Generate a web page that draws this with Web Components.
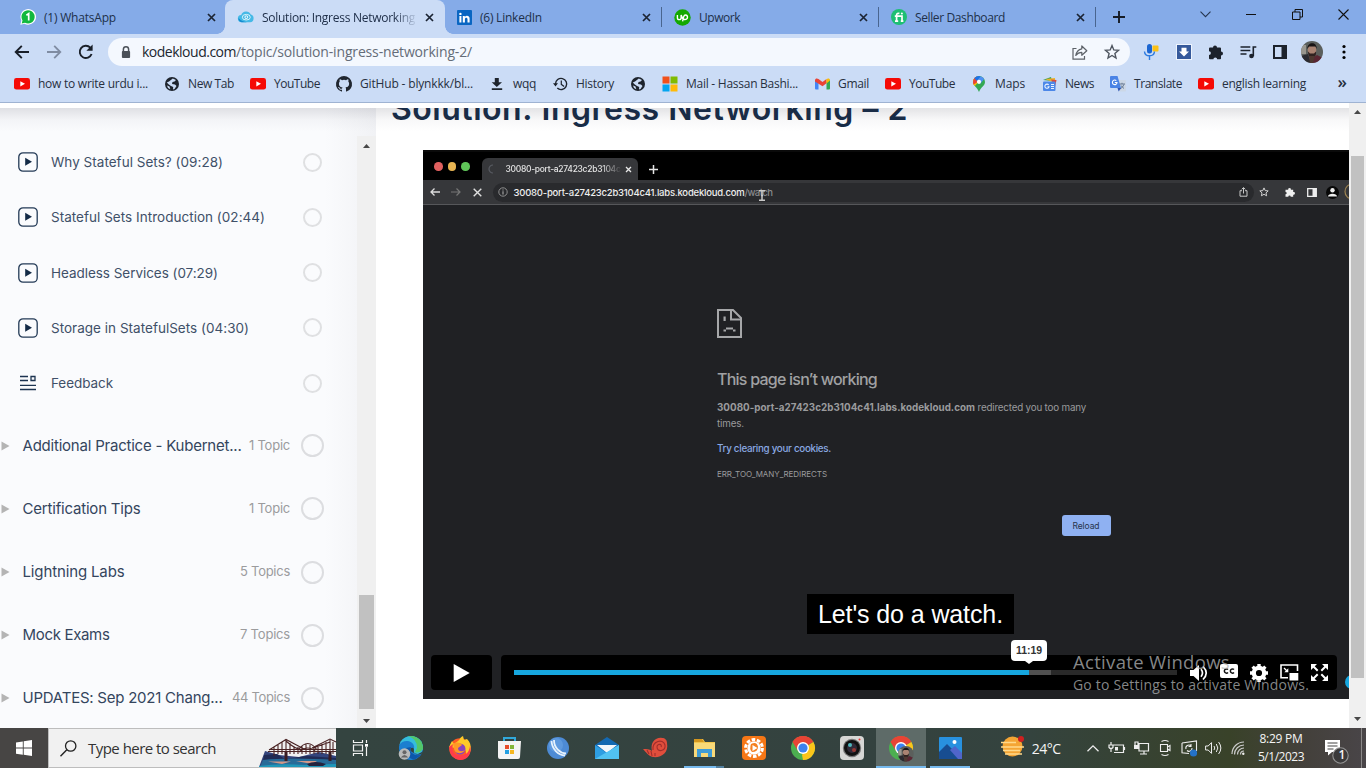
<!DOCTYPE html>
<html lang="en">
<head>
<meta charset="utf-8">
<title>Solution: Ingress Networking</title>
<style>
html,body{margin:0;height:100%;overflow:hidden}
body{font-family:"Open Sans","Noto Sans",sans-serif;font-size:12px;color:#1d2b40;background:#fff}
</style>
</head>
<body>
<desktop-screen></desktop-screen>
<script>
const ICONS = {
  whatsapp:[16,16,'<path d="M.3 15.8 1.4 11.6A7.8 7.8 0 1 1 4.5 14.7z" fill="#fff"/><path d="M1.7 14.4 2.5 11.4A6.6 6.6 0 1 1 5 13.7z" fill="#12b83e"/><path d="M6.4 6.2 8.7 4.6V11.4" stroke="#fff" stroke-width="1.7" fill="none"/>'],
  kode:[16,16,'<path d="M3.7 13.2A3.6 3.6 0 0 1 3.2 6 5.2 5.2 0 0 1 12.8 5.6 3.9 3.9 0 0 1 12.2 13.2z" fill="#45b9e6"/><path d="M3.7 13.2A3.6 3.6 0 0 1 .5 9Q4 13 9 13.2z" fill="#158bd0"/><ellipse cx="8.3" cy="8.2" rx="4" ry="2.8" fill="none" stroke="#d9f3fb"/><circle cx="8.3" cy="8.2" r="1.4" fill="none" stroke="#fff"/>'],
  linkedin:[15,15,'<rect width="15" height="15" rx="1" fill="#0a66c2"/><path d="M2.4 6h2v6.4h-2zM5.8 6h2v.9C9 5.300 12.600 5.300 12.600 8.700v3.700h-2.100V9.200c0-2-2.600-2-2.600 0v3.200H5.800z" fill="#fff"/><circle cx="3.400" cy="3.900" r="1.200" fill="#fff"/>'],
  upwork:[17,17,'<circle cx="8.500" cy="8.500" r="8.200" fill="#14a800"/><path d="M3.400 6v2.700c0 2.500 3.700 2.500 3.700 0V6C7.800 8.500 9 10.200 10.400 10.500 14.300 11 14.300 6 11.500 6 9.300 6 9.300 9 8.600 12.400" fill="none" stroke="#fff" stroke-width="1.400"/>'],
  fiverr:[16,16,'<circle cx="8" cy="8" r="8" fill="#1dbf73"/><path d="M3.800 7.200H11v5M5.600 12.200V6.200C5.600 4.300 7 4.200 8.400 4.300M4 12.200h3.200M9.800 12.200h2.600" fill="none" stroke="#fff" stroke-width="1.700"/><circle cx="10.900" cy="4.600" r="1" fill="#fff"/>'],
  close:[9,9,'<path d="m1 1 7 7M8 1 1 8" stroke="#1b2433" stroke-width="1.700"/>'],
  plus:[12,12,'<path d="M6 0v12M0 6h12" stroke="#161c26" stroke-width="1.900"/>'],
  wdown:[11,7,'<path d="m.5.700 5 5 5-5" fill="none" stroke="#26364f" stroke-width="1.100"/>'],
  wmin:[10,1,'<path d="M0 .5h10" stroke="#111" stroke-width="1"/>'],
  wrest:[11,11,'<path d="M.5 3h7.500v7.500H.5zM3 3V.500h7.500V8H8" fill="none" stroke="#111"/>'],
  wclose:[11,11,'<path d="m.5.500 10 10M10.500.500l-10 10" stroke="#111" stroke-width="1.100"/>'],
  back:[16,14,'<path d="M15 7H2M7.800.800 1.700 7l6.100 6.200" fill="none" stroke="#191f29" stroke-width="1.900"/>'],
  fwd:[16,14,'<path d="M1 7h13M8.200.800 14.300 7l-6.100 6.200" fill="none" stroke="#7f8ca2" stroke-width="1.800"/>'],
  reload:[16,16,'<path d="M13.600 10A6.100 6.100 0 1 1 12.300 3.700" fill="none" stroke="#191f29" stroke-width="1.900"/><path d="M14.600.500v6.200H8.400z" fill="#191f29"/>'],
  lock:[10,13,'<path d="M2.400 6V3.300a2.600 2.600 0 0 1 5.200 0V6" fill="none" stroke="#4a5058" stroke-width="1.500"/><rect x=".9" y="5" width="8.200" height="7" rx="1" fill="#4a5058"/>'],
  share:[16,15,'<path d="M4.500 3.500H1v10.700h11.500V11" fill="none" stroke="#5c6168" stroke-width="1.200"/><path d="M9.800 1v2.800C6 4.400 4.400 7 3.800 10.500 5.600 8 7.400 7.300 9.800 7.300v3L14.800 5.700z" fill="none" stroke="#5c6168" stroke-width="1.200" stroke-linejoin="round"/>'],
  star:[16,16,'<path d="m8 1.500 1.800 4.400 4.700.4-3.600 3.100 1.100 4.600-4-2.500-4 2.500 1.100-4.600L1.500 6.300l4.700-.4z" fill="none" stroke="#4f5660" stroke-width="1.400"/>'],
  mic:[16,16,'<rect x="8.500" y="1.500" width="6" height="6" rx="1" fill="#fbc116"/><rect x="3" y="0" width="5" height="9.500" rx="2.500" fill="#1b66d2"/><path d="M.5 7.500c.3 5.700 9.600 5.700 10 0M5.500 12v4" fill="none" stroke="#2d7be0" stroke-width="1.400"/>'],
  dl:[16,16,'<rect x=".5" y=".5" width="15" height="15" fill="#35599b" stroke="#eef4fd"/><path d="M5.500 3.800h5V7.500H13L8 12.500 3 7.500h2.500z" fill="#fff"/>'],
  puzzle:[16,16,'<path d="M1 4.500q0-1 1-1H5a2 2 0 1 1 4 0h3q1 0 1 1V7.500a2 2 0 1 1 0 4V14.500q0 .8-1 .8H9.200a1.900 1.900 0 0 0-3.800 0H2q-1 0-1-1V11a1.900 1.900 0 0 0 0-3.800z" fill="#1c222c"/>'],
  music:[17,14,'<path d="M.5 2h9.800M.5 5.500h9.800M.5 9h6M13.300 11.200V2h3" fill="none" stroke="#1c222c" stroke-width="1.600"/><circle cx="11.500" cy="11" r="2.300" fill="#1c222c"/>'],
  panel:[14,14,'<path d="M1 1h12v12H1z" fill="none" stroke="#1c222c" stroke-width="2"/><path d="M8.500 1H13v12H8.500z" fill="#1c222c"/>'],
  avatar:[22,22,'<clipPath id="a"><circle cx="11" cy="11" r="11"/></clipPath><g clip-path="url(#a)"><path fill="#5b5f5c" d="M0 0h22v22H0z"/><path fill="#98968e" d="M0 4h5v9H0z"/><path d="M10 22 13 16 16 14l6 3v5z" fill="#5a2633"/><path d="M0 15 7 13 10 22H0z" fill="#2a2a30"/><ellipse cx="11" cy="9" rx="4.300" ry="5.500" fill="#a98372"/><path d="M6.300 8C6 1 16 0 15.700 8L14.500 5.500H8z" fill="#191516"/><path d="M7 10.500 9 12.500h4l2-2c1 8-8 9-8 0z" fill="#302220"/><path d="M8 15h6l-2 7H9z" fill="#4e3830"/></g>'],
  dots:[4,16,'<circle cx="2" cy="2.500" r="1.600"/><circle cx="2" cy="8" r="1.600"/><circle cx="2" cy="13.500" r="1.600"/>'],
  yt:[16,12,'<rect width="16" height="11.600" rx="2.400" fill="#f50a05"/><path d="M6.300 3.200v5.200L11 5.800z" fill="#fff"/>'],
  globe:[14,14,'<circle cx="7" cy="7" r="7" fill="#1e242d"/><path d="M7.800 1.500 11 3 9.500 4.500 7.500 5 7 7l3 .5L11.500 9 9.500 12 8 12.500 8.200 10 6 9 3.500 7.200 1.800 5.500 4 4.500z" fill="#cbdcf6"/><path d="m2 8.500 2.500 1 .8 2.700L3 11z" fill="#cbdcf6"/>'],
  github:[16,16,'<path fill="#20262f" d="M8 0a8 8 0 0 0-2.530 15.590c.4.070.55-.17.550-.38l-.010-1.490c-2.010.370-2.530-.490-2.690-.940-.090-.230-.480-.940-.820-1.130-.280-.150-.680-.520-.010-.530.630-.010 1.080.580 1.230.820.720 1.210 1.870.870 2.330.660.070-.520.280-.870.510-1.070-1.780-.200-3.640-.890-3.640-3.950 0-.870.310-1.590.820-2.150-.080-.200-.360-1.020.080-2.120 0 0 .670-.210 2.200.820a7.400 7.400 0 0 1 4 0c1.530-1.040 2.200-.820 2.200-.820.440 1.100.160 1.920.080 2.120.510.560.820 1.270.820 2.150 0 3.070-1.870 3.750-3.650 3.950.290.250.540.730.540 1.480l-.010 2.200c0 .210.150.460.550.380A8 8 0 0 0 8 0z"/>'],
  download:[12,12,'<path d="M3.800 0h4v4.300H11L5.800 9 .7 4.300h3.100zM.8 10.200h10.400v1.700H.8z" fill="#1e242d"/>'],
  history:[15,14,'<path d="M2.500 7a5.600 5.600 0 1 1 1.800 4.100" fill="none" stroke="#1e242d" stroke-width="1.400"/><path d="M0 6.300h5L2.500 9.500zM7.700 3.500h1.200v3.600L11.500 9l-.8.900-3-2.200z" fill="#1e242d"/>'],
  ms:[16,16,'<path fill="#f1511b" d="M.5.500h7v7h-7z"/><path fill="#80bb01" d="M8.500.500h7v7h-7z"/><path fill="#03a5f0" d="M.5 8.500h7v7h-7z"/><path fill="#ffba08" d="M8.500 8.500h7v7h-7z"/>'],
  gmail:[15,12,'<path d="M0 1.500 3.500 4v7.500H1a1 1 0 0 1-1-1z" fill="#4285f4"/><path d="M15 1.500 11.500 4v7.500H14a1 1 0 0 0 1-1z" fill="#34a853"/><path d="M0 2.500C0 .4 2 0 3.500 1L7.500 4l4-3v4.300L7.500 8.300 0 3.500z" fill="#ea4335"/><path d="M11.500 1C13 0 15 .4 15 2.500l-3.500 3z" fill="#fbbc04"/>'],
  maps:[12,16,'<clipPath id="m"><path d="M6 0a6 6 0 0 1 6 6c0 4-4 4.500-6 10C4 10.500 0 10 0 6a6 6 0 0 1 6-6z"/></clipPath><g clip-path="url(#m)"><path d="M0 0h12v16H0z" fill="#34a853"/><path d="M0 12 10 1H0z" fill="#fbbc04"/><path d="M0 0h4l2 5L0 9z" fill="#ea4335"/><path d="M1 2 4 5 8 1 7 0H3z" fill="#1a73e8"/><path d="M8 0 4 5l3 3 5-6z" fill="#4f91f4"/></g><circle cx="6" cy="5.800" r="2.100" fill="#fff"/>'],
  news:[15,14,'<path d="m1 3 8-3 1 4z" fill="#2d9c57"/><path d="M3 2 13 1v5z" fill="#e9b32b"/><path d="M9 2.500 14.500 3 13 10z" fill="#d94b3e"/><rect x="1" y="4.500" width="12.500" height="9.500" rx="1" fill="#4c87e8"/><path d="M6.700 8A2.100 2.100 0 1 0 7 9.800H5.500M9 7.500h3M9 9.500h3M9 11.500h3" fill="none" stroke="#e8f2ff" stroke-width="1.100"/>'],
  translate:[16,16,'<path d="M6 4h9q1 0 1 1v9.500q0 1-1 1H9z" fill="#ccd7e6"/><path d="M1 0h6.500l3.500 12H1q-1 0-1-1V1q0-1 1-1z" fill="#4a83e5"/><path d="M6.300 4.700A2.300 2.300 0 1 0 7 6.500H4.800" fill="none" stroke="#fff" stroke-width="1.100"/><path d="M9.500 8h5.500M12 6.800V8M14 8.300Q13 11.500 10 13M10.800 9.500 14 12.500" fill="none" stroke="#697b93"/><path d="M7.500 12h3.500L8.700 15.500z" fill="#3055b4"/>'],
  play:[20,20,'<rect x=".8" y=".8" width="18.400" height="18.400" rx="4.200" fill="none" stroke="#233a56" stroke-width="1.300"/><path d="M7.200 5.800v7.900L14 9.800z" fill="#142b47"/>'],
  feedback:[16,16,'<path d="M0 1.500h8M0 5.500h8M0 10.300h16M0 14.500h16M11 1.500h4v4h-4z" fill="none" stroke="#1c3350" stroke-width="1.300"/>'],
  tri:[8,10,'<path d="M.5 .5v9L8.500 5z" fill="#b4b4b4"/>'],
  up:[7,4,'<path d="M0 4 3.500 0 7 4z" fill="#484848"/>'], down:[7,4,'<path d="M0 0h7L3.500 4z" fill="#484848"/>'],
  spin:[10,10,'<path d="M5 9A4 4 0 0 1 5 1" fill="none" stroke="#585b62" stroke-width="1.200"/>'],
  vclose:[7,7,'<path d="m1 1 5 5M6 1 1 6" stroke="#e8e8e8" stroke-width="1.300"/>'],
  vplus:[9,9,'<path d="M4.500 0v9M0 4.500h9" stroke="#e4e4e4" stroke-width="1.500"/>'],
  vback:[10,8,'<path d="M10 4H1M4.500.500 1 4l3.500 3.500" fill="none" stroke="#ddd" stroke-width="1.300"/>'],
  vfwd:[10,8,'<path d="M0 4h9M5.500.500 9 4 5.500 7.500" fill="none" stroke="#777" stroke-width="1.200"/>'],
  vx:[9,9,'<path d="m.7.700 7.600 7.600M8.300.700.700 8.300" stroke="#e0e0e0" stroke-width="1.400"/>'],
  info:[10,10,'<circle cx="5" cy="5" r="4.200" fill="none" stroke="#999" stroke-width=".9"/><path d="M5 4.300V7.500M5 2.500v1" stroke="#aaa" stroke-width="1.100"/>'],
  beam:[8,11,'<path d="M1 .8h6M4 .8v9.400M1 10.200h6M3 5.500h2" stroke="#c8c8c8" stroke-width="1.500"/>'],
  vshare:[9,10,'<path d="M3 3.700H1v5.500h7V3.700H6M4.500 6.500V.800M2.700 2.300 4.500.600 6.300 2.300" fill="none" stroke="#c8c8c8" stroke-width="1"/>'],
  vstar:[10,10,'<path d="m5 .9 1.200 2.700 3 .3L7 5.900l.6 2.900L5 7.300 2.400 8.800 3 5.900.8 3.900l3-.3z" fill="none" stroke="#d2d2d2"/>'],
  vpuzzle:[10,10,'<path d="M.5 2.700h2.700a1.400 1.400 0 1 1 2.700 0h2.300V5a1.400 1.400 0 1 1 0 2.700V9.800H5.700a1.200 1.200 0 0 0-2.400 0H.5V7.300a1.200 1.200 0 0 0 0-2.400z" fill="#f0f0f0"/>'],
  vpanel:[10,9,'<path d="M.7.700h8.600v7.600H.7z" fill="none" stroke="#eee" stroke-width="1.300"/><path d="M5.500 1h3.500v7H5.500z" fill="#eee"/>'],
  vperson:[13,13,'<circle cx="6.500" cy="6.500" r="6.500" fill="#080808"/><circle cx="6.500" cy="4.300" r="2.200" fill="#eee"/><path d="M2 10.500C2 6.800 11 6.800 11 10.500z" fill="#eee"/>'],
  ring:[12,17,'<circle cx="8.500" cy="8.500" r="7.500" fill="none" stroke="#9d8352" stroke-width="1.200"/>'],
  sad:[25,30,'<path d="M1 1h15l8 8v19H1z" fill="none" stroke="#a6a7a9" stroke-width="2"/><path d="M14 1v9.500h10" fill="none" stroke="#a6a7a9" stroke-width="2"/><path d="M6.500 7.500h2.200v4.500H6.500zM9 18.500h7v2H9zM6.500 20.500h2.500v2H6.500zM16 20.500h2.500v2H16z" fill="#a6a7a9"/>'],
  vplay:[16,18,'<path d="M.7 0v18l16-9z" fill="#fff"/>'],
  vol:[20,18,'<path d="M1 6h3.500L10 1v16l-5.500-5H1z" fill="#fff"/><path d="M12 5.300Q15 9 12 12.700M14 2.500Q20.500 9 14 15.500" fill="none" stroke="#fff" stroke-width="1.700"/>'],
  cc:[18,14,'<rect width="18" height="14" rx="2" fill="#fff"/><path d="M8 5.600A2.100 2.100 0 1 0 8 8.500M14 5.600A2.100 2.100 0 1 0 14 8.500" fill="none" stroke="#111" stroke-width="1.500"/>'],
  gear:[18,18,'<circle cx="9" cy="9" r="5.200" fill="none" stroke="#fff" stroke-width="4.200"/><path d="M9 0v3.500M9 14.500V18M0 9h3.500M14.500 9H18M2.600 2.600l2.500 2.500M12.900 12.900l2.500 2.500M15.400 2.600l-2.500 2.500M5.100 12.900l-2.500 2.500" stroke="#fff" stroke-width="3.400"/>'],
  pip:[19,17,'<path d="M8 13.800H1V1h16.500v6" fill="none" stroke="#fff" stroke-width="1.600"/><path d="M9.500 9h8.800v7.500H9.500zM8.300 4.300v4H4.300z" fill="#fff"/><path d="M4 4 7 7" stroke="#fff" stroke-width="1.300"/>'],
  full:[17,17,'<path d="M0 0h6L0 6zM17 0v6l-6-6zM0 17v-6l6 6zM17 17h-6l6-6z" fill="#fff"/><path d="m2 2 4.700 4.700M15 2l-4.700 4.700M2 15l4.700-4.700M15 15l-4.700-4.700" stroke="#fff" stroke-width="2"/>'],
  win:[16,16,'<path d="M0 2.400 6.800 1.400V7.600H0zM7.700 1.200 16 0v7.600H7.700zM0 8.500h6.800v6.200L0 13.700zM7.700 8.500H16V16L7.700 14.800z" fill="#fff"/>'],
  search:[17,17,'<circle cx="10.700" cy="6" r="5.200" fill="none" stroke="#222" stroke-width="1.300"/><path d="m6.800 9.800-6.300 6.500" stroke="#222" stroke-width="1.400"/>'],
  bridge:[77,29,'<path d="M0 29 6 13 20 17 40 19 60 14 77 18V29z" fill="#33447c"/><path d="M5 17 18 16 26 21 47 18 77 20v3L4 24z" fill="#202b55"/><path d="M4 22q25-3 73 0v7H1z" fill="#276b98"/><path d="M9 23.500h23l-9 2.500zM37 23h21l-5 3z" fill="#d39887"/><path d="M0 28q20-3 45-1l32-1v3H0z" fill="#1f97b9"/><path d="M48 26q8-4 19 0l-3 2H50z" fill="#25233e"/><path d="M10 11.500h67M9 13.500h68M10 12 27 1.500 45 11M27 2v20M45 11q-7 2-18-8M39 12q10-13 19 0M40 14q9-8 17 0M53 10 71 1l6 3M71 2v20M54 10l17-6M15 9v9M19 7v9M23 4v12M31 5v11M35 8v8M39 9v7M43 8v8M47 6v10M51 7v9M55 9v7M59 8v8M63 6v10M67 4v12M74 4v12" fill="none" stroke="#4a2324" stroke-width="1.100"/><path d="M25.500 14h3v9h-3zM69.500 14h3v9h-3z" fill="#3a1d22"/>'],
  task:[17,16,'<path d="M1.500 0v2.500h9V0M1.500 16v-2.500h9V16M1.500 5h9v6h-9zM14.500 0v3M14.500 7v9" fill="none" stroke="#f2f2f2" stroke-width="1.200"/><path d="M13 4h3v2.700h-3z" fill="#fff"/>'],
  edge:[25,25,'<clipPath id="e"><circle cx="13" cy="12" r="12"/></clipPath><g clip-path="url(#e)"><path d="M0 0h26v25H0z" fill="#1b7fd0"/><path d="M0 12C2 3 14 3 16 10c1 4-3 4 0 7 4 3 9-1 9-5V0H0z" fill="#35bddc"/><path d="M9 0q10 2 10 12l-2 4q5 2 9-4V0z" fill="#52c76a"/><path d="M8 12q-1 9 8 12l9-6q-7 3-11-1-3-2-1-6z" fill="#0c57aa"/><path d="M13 12q3-1 3 2-1 4 4 4l6-3v2q-6 3-10 0-5-2-3-5z" fill="#34433f"/></g><circle cx="6.500" cy="18" r="5.800" fill="#b8bab9"/><circle cx="6.500" cy="16.300" r="2" fill="#666"/><path d="M2.800 21.500q3.700-5 7.400 0z" fill="#666"/>'],
  firefox:[24,24,'<circle cx="12" cy="13" r="10.700" fill="#ff5c24"/><path d="M1 11 4 5l2 3 4-3c2-1 1-3 5-5l1 4 3-1c6 5 5 17-4 20 4-4 4-8 1-10z" fill="#ffca28"/><path d="M1 11q1 12 11 13c9 0 12-8 10-14-1 8-6 10-12 9S4 12 5 8z" fill="#ff3c4b"/><circle cx="12" cy="13" r="5.500" fill="#8944bd"/><path d="M5 8c4-3 8-1 9 1l-4 3c0 4 4 4 7 2-3 5-11 4-11-2z" fill="#ff9a26"/>'],
  store:[24,24,'<path d="M7 5V2h11v3" fill="none" stroke="#31a9db" stroke-width="2"/><path d="M1 5h23l-1 16q0 2-2 2H3q-2 0-2-2z" fill="#f4f4f4"/><path fill="#e74d2b" d="M8 9h4v4H8z"/><path fill="#82b63a" d="M13 9h4v4h-4z"/><path fill="#249fe2" d="M8 14h4v4H8z"/><path fill="#f6b720" d="M13 14h4v4h-4z"/>'],
  ball:[22,22,'<circle cx="11" cy="11" r="11" fill="#4d8bd5"/><circle cx="9" cy="8" r="7" fill="#6ba5e6" opacity=".6"/><path d="M4.500 4C5 12 11 18 18 18.500M7 3C7 11 13 16 19 16.500" fill="none" stroke="#e6f2fd" stroke-width="1.800"/>'],
  mail:[24,22,'<path d="m0 8 12-8 12 8v14H0z" fill="#1469b2"/><path d="M2 8h20l-10 8z" fill="#f3f7fb"/><path d="m0 8 12 8L24 8v14H0z" fill="#2e9ee2"/><path d="m0 22 24-14v14z" fill="#51c2f2"/>'],
  snail:[25,22,'<path d="M24 6c2 10-6 15-14 14-5-1-7-5-10-8 4 0 6 0 9 2C7 5 13 0 19 1c3 0 5 2 5 5z" fill="#e04e3c"/><path d="M10 13c-1-9 10-12 12-5 1 6-8 8-8 2 0-4 6-3 4 0M4 13l2 4M8 14l1 5M12 16v3" fill="none" stroke="#a12d2b" stroke-width="1.100"/>'],
  folder:[23,20,'<path d="M1 1h9l2 3h10v15H1z" fill="#f3c74e"/><path d="M1 1h8l2 3H1z" fill="#d5971f"/><path d="M1 5h21v14H1z" fill="#f9d978"/><path d="M4 19v-8h15v8h-4v-4H8v4z" fill="#3f9cd7"/>'],
  clip:[24,24,'<rect width="24" height="24" rx="4" fill="#f67716"/><circle cx="12" cy="12" r="8.400" fill="none" stroke="#fff" stroke-width="3" stroke-dasharray="3.600 1.680"/><circle cx="12" cy="12" r="6.700" fill="#fff"/><path d="M9 8q6-3 7 3 0 5-6 5-3-3-1-8z" fill="#f58120"/><path d="m10.500 9 5 3-5 3zM15 14l3 2v-4z" fill="#fff"/>'],
  chrome:[24,24,'<circle cx="12" cy="12" r="12" fill="#4caf50"/><path d="M1.600 6A12 12 0 0 1 22.400 6L12 12z" fill="#e84435"/><path d="M22.400 6A12 12 0 0 1 12 24l-1-5 5-9z" fill="#fbc51a"/><path d="M1.600 6 7 15l5-3V6h10.400A12 12 0 0 0 1.600 6z" fill="#e84435"/><circle cx="12" cy="12" r="6" fill="#fff"/><circle cx="12" cy="12" r="4.600" fill="#3d82ee"/>'],
  camera:[24,24,'<rect width="24" height="24" rx="4" fill="#d7d7d5"/><circle cx="12" cy="12" r="9.200" fill="#777"/><circle cx="12" cy="12" r="8" fill="#111"/><circle cx="12" cy="12" r="5" fill="#312a38"/><circle cx="10" cy="9" r="2" fill="#4eb7bd"/><circle cx="14" cy="14" r="2" fill="#963833"/><circle cx="19.500" cy="3.500" r="1" fill="#e33"/>'],
  photos:[23,22,'<rect width="23" height="22" rx="1" fill="#2891df"/><path d="M0 22V15L8 7l15 15z" fill="#174d91"/><path d="m11 13 5-4 7 7v6h-4z" fill="#5065ca"/><circle cx="15.500" cy="5" r="2" fill="#fff"/>'],
  weather:[24,21,'<circle cx="12.500" cy="10.500" r="10" fill="#f4a534"/><path d="M1 11h23M3 14.500h17M1 6.500h15M5 18h17" stroke="#ffd98a" stroke-width="1.600"/><circle cx="21" cy="3" r="3" fill="#cf2020"/>'],
  chev:[12,7,'<path d="m.5 6.300 5.500-5.500 5.500 5.500" fill="none" stroke="#eee" stroke-width="1.300"/>'],
  batt:[17,13,'<path d="M5 5V3h10.500v7.500H6M3 0v3M1 3h4v2.500q-2 2-4 0zM3 7v3M16.500 5v3" fill="none" stroke="#eee" stroke-width="1.200"/><path d="M7 5h3v3.500H7z" fill="#eee"/>'],
  net:[15,14,'<path d="M5 2.500h9.500v7.500H5zM10 10v3M6 13h7M1 4V1h3v3" fill="none" stroke="#eee" stroke-width="1.200"/><path d="M0 4h5v4H0z" fill="#eee"/>'],
  meet:[12,16,'<path d="M2.500 1.500q3.500-2 7 0M2.500 14.500q3.500 2 7 0M1.500 4.500h7v7h-7zM8.500 7l2.500-1.500v5L8.500 9" fill="none" stroke="#eee" stroke-width="1.100"/>'],
  sync:[17,17,'<path d="M1 3 15.500 1v10M8 13.500l-7-.7V3M5 9a3 3 0 0 1 5-3M10 4v2.500H7.500M11 8a3 3 0 0 1-5 2.500" fill="none" stroke="#eee" stroke-width="1.100"/><circle cx="12.500" cy="13" r="3.600" fill="#2472c9"/>'],
  sound:[17,14,'<path d="M.6 5h2.600L6.500 1.600v10.800L3.200 9H.600z" fill="none" stroke="#eee"/><path d="M9 5q1.500 2 0 4M11.300 3q3 4 0 8M13.600 1q4.500 6 0 12" fill="none" stroke="#eee"/>'],
  wifi:[14,14,'<path d="M1 13A12 12 0 0 1 13 1M3.500 13.500A9.500 9.500 0 0 1 13 4M6.500 13.500A6.500 6.500 0 0 1 13 7M9.500 13.500A3.500 3.500 0 0 1 13 10" fill="none" stroke="#ccc" stroke-width="1.200"/><circle cx="12.300" cy="12.700" r="1.200" fill="#eee"/>'],
  note:[26,26,'<path d="M1 1h15v12H8l-4 3.500V13H1z" fill="#fff"/><path d="M3.500 4h10M3.500 7h10M3.500 10h6" stroke="#444" stroke-width="1.200"/><circle cx="16.500" cy="16.500" r="7.700" fill="#3b3a3b" stroke="#949494" stroke-width="1.100"/>']
};

/* Base class: renders its view() once into an open shadow root. */
class View extends HTMLElement {
  connectedCallback() {
    if (this.shadowRoot) return;
    const t = document.createElement('template');
    t.innerHTML = '<style>*{box-sizing:border-box}' + this.css() + '</style>' + this.view();
    this.attachShadow({mode:'open'}).append(t.content.cloneNode(true));
  }
  css() { return ''; }
  view() { return '<slot></slot>'; }
}
const ic = (n, extra='') => `<ui-icon name="${n}" ${extra}></ui-icon>`;
const tx = (s, w, extra='') => `<ui-text w="${w}" ${extra}>${s}</ui-text>`;

class UiIcon extends View {
  css() { return ':host{display:block;flex:none}svg{display:block;overflow:visible}'; }
  view() {
    const [w,h,b] = ICONS[this.getAttribute('name')], k = +(this.getAttribute('scale')||1);
    return `<svg width="${w*k}" height="${h*k}" viewBox="0 0 ${w} ${h}">${b}</svg>`;
  }
}
/* Icon centred in a cell of fixed width. */
class IconCell extends View {
  css() { return `:host{display:flex;flex:none;align-items:center;justify-content:center;width:${this.getAttribute('w')||32}px;height:100%}`; }
  view() { return ic(this.getAttribute('name')) + '<slot></slot>'; }
}
/* One line of text whose tracking is adjusted to the width given in w. */
class UiText extends View {
  css() { return ':host{display:inline-block;flex:none;width:max-content;white-space:pre}'; }
  connectedCallback() {
    super.connectedCallback();
    const w = +this.getAttribute('w'), n = this.textContent.length;
    if (w) this.style.letterSpacing = ((w - this.getBoundingClientRect().width) / n).toFixed(4) + 'px';
  }
}

class BrowserTab extends View {
  css() { const a = this.hasAttribute('active'); return `
    :host{display:flex;flex:none;align-items:center;position:relative;height:34px;width:${this.getAttribute('w')||217}px;padding:0 11px 0 ${this.getAttribute('pad')||12}px;gap:8px}
    .bg{position:absolute;inset:0 0 0 -2px;background:#cbdcf6;border-radius:8px 8px 0 0;z-index:-1}
    .bg:before,.bg:after{content:"";position:absolute;bottom:0;width:8px;height:8px}
    .bg:before{left:-8px;background:radial-gradient(circle at 0 0,transparent 7.500px,#cbdcf6 8px)}
    .bg:after{right:-8px;background:radial-gradient(circle at 100% 0,transparent 7.500px,#cbdcf6 8px)}
    .t{flex:1;min-width:0;${a?'-webkit-mask-image:linear-gradient(90deg,#000 132px,transparent 156px);overflow:hidden;':''}}
    .sep{position:absolute;right:0;top:7px;width:1px;height:20px;background:#49658f}`; }
  view() { return (this.hasAttribute('active')?'<div class="bg"></div>':'') + ic(this.getAttribute('icon')) +
    `<div class="t">${tx(this.getAttribute('label'), this.getAttribute('tw'))}</div>` + ic('close') +
    (this.hasAttribute('sep')?'<div class="sep"></div>':''); }
}
class TabStrip extends View {
  css() { return ':host{display:flex;height:34px;background:#85abe8;position:relative;z-index:0;color:#20304a}.wc{display:flex;height:28px;margin-left:auto}'; }
  view() { return `<browser-tab w="227" pad="20" icon="whatsapp" label="(1) WhatsApp" tw="72"></browser-tab>
    <browser-tab w="218" active pad="11" icon="kode" label="Solution: Ingress Networking" tw="153"></browser-tab>
    <browser-tab pad="12" icon="linkedin" label="(6) LinkedIn" tw="62" sep></browser-tab>
    <browser-tab icon="upwork" label="Upwork" tw="41" sep></browser-tab>
    <browser-tab icon="fiverr" label="Seller Dashboard" tw="90" sep></browser-tab>
    <icon-cell name="plus" w="46"></icon-cell>
    <div class="wc"><icon-cell name="wdown" w="46"></icon-cell><icon-cell name="wmin" w="46"></icon-cell><icon-cell name="wrest" w="46"></icon-cell><icon-cell name="wclose" w="46"></icon-cell></div>`; }
}
class ToolBar extends View {
  css() { return `:host{display:flex;height:36px;padding:0 6px;background:#cbdcf6;align-items:center}
    .omni{width:1022px;height:28px;margin:0 6px;border-radius:14px;background:#f4f8fe;display:flex;align-items:center;padding:0 2px;font-size:14px;color:#646c78}
    .omni b{font-weight:400;color:#20262f}.url{flex:1;display:flex;padding-bottom:1px}`; }
  view() { return '<icon-cell name="back"></icon-cell><icon-cell name="fwd"></icon-cell><icon-cell name="reload"></icon-cell>' +
    `<div class="omni"><icon-cell name="lock"></icon-cell><div class="url"><b>${tx('kodekloud.com',94)}</b>${tx('/topic/solution-ingress-networking-2/',236)}</div>
    <icon-cell name="share"></icon-cell><icon-cell name="star"></icon-cell></div>` +
    ['mic','dl','puzzle','music','panel','avatar','dots'].map(n=>`<icon-cell name="${n}"></icon-cell>`).join(''); }
}
const BOOKMARKS = [['yt','how to write urdu i...',110],['globe','New Tab',46],['yt','YouTube',46],['github','GitHub - blynkkk/bl...',113],['download','wqq',23],['history','History',38],['globe','',0],['ms','Mail - Hassan Bashi...',112],['gmail','Gmail',31],['yt','YouTube',46],['maps','Maps',30],['news','News',29],['translate','Translate',48],['yt','english learning',84]];
class BookmarkBar extends View {
  css() { return `:host{display:flex;height:33px;padding:0 19px 5px 14px;gap:16px;background:#cbdcf6;border-bottom:1px solid #9fb3d2;align-items:center;color:#27303f}
    .b{display:flex;gap:8px;align-items:center;height:100%}.more{margin-left:auto;font-size:17px;font-weight:600;line-height:20px;padding-bottom:3px}`; }
  view() { return BOOKMARKS.map(([i,l,w])=>`<div class="b"><icon-cell name="${i}" w="16"></icon-cell>${l?tx(l,w):''}</div>`).join('') + '<div class="more">»</div>'; }
}

class LessonRow extends View {
  css() { return `:host{display:flex;align-items:center;height:55.250px;padding:0 35px 0 18px;font-size:13.500px;color:#3f5068}
    .i{width:33px}.i.f{padding-left:2px}.c{margin-left:auto;width:19px;height:19px;border-radius:50%;border:2px solid #dfe0e2}`; }
  view() { const f = this.getAttribute('icon'); return `<div class="i ${f==='feedback'?'f':''}">${ic(f)}</div>${tx(this.getAttribute('label'),this.getAttribute('w'))}<div class="c"></div>`; }
}
class SectionRow extends View {
  css() { return `:host{display:flex;align-items:center;height:63.100px;padding:0 33px 0 1px;font-size:15px;color:#34455d}
    .l{margin:-1px 0 0 13.500px;flex:1}.m{font-size:13px;color:#9b9b9d;margin:-2px 11px 0 0}.c{width:23px;height:23px;border-radius:50%;border:2px solid #dcdde0}`; }
  view() { const g=a=>this.getAttribute(a); return `${ic('tri')}<div class="l">${tx(g('label'),g('w'))}</div><div class="m">${tx(g('count'),g('cw'))}</div><div class="c"></div>`; }
}
/* Scrollbar with arrows; thumb position is given by the space above it. */
class ScrollBar extends View {
  css() { const g=a=>this.getAttribute(a); return `:host{display:flex;flex-direction:column;align-items:center;background:#f0f0f0;width:${g('w')}px;padding:${g('pt')}px 0 7px}
    .t{width:${g('tw')}px;height:${g('len')}px;margin-top:${g('gap')}px;background:#c1c1c1;flex:none}.d{margin-top:auto}`; }
  view() { return ic('up') + '<div class="t"></div>' + ic('down','class="d"'); }
}
class CourseSidebar extends View {
  css() { return `:host{display:grid;grid-template-columns:357px 19px;width:376px;height:620px;overflow:hidden;background:linear-gradient(90deg,#fafbfd 325px,#f1f2f5 376px);font-family:Inter,sans-serif}
    .list{padding-top:26.500px}.gap{height:3.600px}scroll-bar{margin-top:28px}`; }
  view() {
    const L=[['play','Why Stateful Sets? (09:28)',172],['play','Stateful Sets Introduction (02:44)',214],['play','Headless Services (07:29)',167],['play','Storage in StatefulSets (04:30)',198],['feedback','Feedback',62]];
    const S=[['Additional Practice - Kubernet...',219,'1 Topic',41],['Certification Tips',118,'1 Topic',41],['Lightning Labs',102,'5 Topics',50],['Mock Exams',87,'7 Topics',50],['UPDATES: Sep 2021 Chang...',200,'44 Topics',58]];
    return '<div class="list">' + L.map(([i,l,w])=>`<lesson-row icon="${i}" label="${l}" w="${w}"></lesson-row>`).join('') + '<div class="gap"></div>' +
      S.map(([l,w,c,cw])=>`<section-row label="${l}" w="${w}" count="${c}" cw="${cw}"></section-row>`).join('') +
      '</div><scroll-bar w="19" tw="15" pt="8" gap="447" len="114"></scroll-bar>';
  }
}

class VideoPlayer extends View {
  css() { return `:host{display:block;position:relative;width:926px;height:549px;background:#202124;overflow:hidden;font-family:Inter,Roboto,sans-serif}
    .top{height:30px;background:#000;display:flex;align-items:flex-end;padding-left:11px;border-top:2px solid #0a0a0a}
    .lights{display:flex;gap:5px;align-self:center;width:48px;padding-top:1px}.lights i{width:8.500px;height:8.500px;border-radius:50%}
    .tab{width:156px;height:22px;background:#36373a;border-radius:6px 6px 0 0;display:flex;align-items:center;padding:0 6px;font-size:8.500px;color:#e4e4e4}
    .tt{margin-left:7.500px;flex:1;overflow:hidden;line-height:12px;font-weight:500;-webkit-mask-image:linear-gradient(90deg,#000 95px,transparent 116px)}
    .add{align-self:center;margin:6px 0 0 11px}
    .bar{height:25px;background:#36373a;border-bottom:1px solid #56575a;display:flex;align-items:center;padding:0 0 0 1.500px}
    .pill{height:19px;width:761px;margin-left:5px;border-radius:10px;background:#292a2d;display:flex;align-items:center;font-size:9.500px;color:#eee;font-weight:500}
    .pill span{color:#8a8b8d}.st{margin-left:auto}
    .beam{position:absolute;left:335px;top:40px}.ring{position:absolute;left:921px;top:33px}
    .err{padding:104px 0 0 294px;width:690px;color:#9a9b9d;font-size:9.800px}
    h2{margin:29px 0 10px;font-size:16px;line-height:22px;font-weight:500;color:#a0a1a3}.p{line-height:15.500px;height:31px}.p b{font-weight:700}
    .p ui-text,.a ui-text,.e ui-text,h2 ui-text{display:block}.p{display:grid;grid-template-columns:258px auto;justify-content:start}
    .a{color:#8aa9e2;font-weight:500;line-height:15px;margin-top:10px}.e{font-size:8px;line-height:15px;margin-top:11px}
    .btn{margin:33px 2.500px 0 auto;width:49px;height:21px;border-radius:3px;background:#8fb1f2;color:#27344b;display:flex;align-items:center;justify-content:center;font-size:8.500px}
    .cap{position:absolute;left:384px;top:444px;width:207px;height:40px;background:#000;color:#fff;font:25px/40px "Liberation Sans",Arial,sans-serif;text-align:center}
    .ctl{position:absolute;left:8px;right:12px;top:505px;height:35px;display:flex;gap:9px}
    .pb{width:61px;background:#000;border-radius:4px;display:flex;align-items:center;justify-content:center}
    .cb{flex:1;background:#000;border-radius:4px;display:flex;align-items:center;padding:0 2px 0 13px}
    .track{width:663px;height:5px;background:linear-gradient(90deg,#16a7df 515px,#505050 515px 537px,#292929 537px)}
    .ics{display:flex;margin-left:7px;gap:0}
    .tip{position:absolute;left:588px;top:490px;width:36px;height:21px;background:#fff;border-radius:4px;color:#333;font:700 10.500px/21px "Liberation Sans",Arial,sans-serif;text-align:center}
    .tip:after{content:"";position:absolute;left:14px;top:21px;border:4px solid transparent;border-top:3px solid #fff}
    .dot{position:absolute;left:922px;top:525px;width:14px;height:14px;border-radius:50%;background:#16a7df}`; }
  view() { return `<div class="top"><div class="lights"><i style="background:#e0605f"></i><i style="background:#e8b552"></i><i style="background:#5fc458"></i></div>
      <div class="tab">${ic('spin')}<div class="tt">${tx('30080-port-a27423c2b3104c',115)}</div>${ic('vclose')}</div>${ic('vplus','class="add"')}</div>
    <div class="bar"><icon-cell name="vback" w="21"></icon-cell><icon-cell name="vfwd" w="21"></icon-cell><icon-cell name="vx" w="21"></icon-cell>
      <div class="pill"><icon-cell name="info" w="21"></icon-cell>${tx('30080-port-a27423c2b3104c41.labs.kodekloud.com',231)}<span>${tx('/watch',28)}</span>
      <icon-cell class="st" name="vshare" w="21"></icon-cell></div><icon-cell name="vstar" w="21"></icon-cell><icon-cell name="vpuzzle" w="31"></icon-cell><icon-cell name="vpanel" w="12"></icon-cell><icon-cell name="vperson" w="30"></icon-cell></div>
    <div class="beam">${ic('beam')}</div><div class="ring">${ic('ring')}</div>
    <div class="err">${ic('sad')}<h2>${tx('This page isn’t working',160)}</h2>
      <div class="p"><b>${tx('30080-port-a27423c2b3104c41.labs.kodekloud.com',258)}</b>${tx(' redirected you too many',111)}${tx('times.',27)}</div>
      <div class="a">${tx('Try clearing your cookies.',114)}</div><div class="e">${tx('ERR_TOO_MANY_REDIRECTS',110)}</div><div class="btn">${tx('Reload',27)}</div></div>
    <div class="cap">${tx("Let's do a watch.",185)}</div>
    <div class="ctl"><div class="pb">${ic('vplay')}</div><div class="cb"><div class="track"></div><div class="ics">
      ${['vol','cc','gear','pip','full'].map(n=>`<icon-cell name="${n}" w="30.300"></icon-cell>`).join('')}</div></div></div>
    <div class="tip">${tx('11:19',26)}</div><div class="dot"></div>`; }
}
class CoursePage extends View {
  css() { return `:host{display:block;position:relative;height:625px;background:#fff;overflow:hidden}
    .cols{display:flex;height:620px;margin-top:5px}
    main{flex:1;display:flex;flex-direction:column;overflow:hidden;height:620px}
    h1{margin:-17px 0 0 15px;height:59px;font:600 32px/36px Inter,sans-serif;color:#172c47}
    video-player{margin-left:47px}
    .shade{position:absolute;left:0;right:17px;top:5px;height:24px;background:linear-gradient(rgba(40,40,60,.13),rgba(40,40,60,.03) 50%,transparent)}
    scroll-bar{position:relative;margin-top:-5px;height:625px}
    .wm{position:absolute;left:1073px;top:545px;color:rgba(178,180,182,.75);font-family:"Open Sans",sans-serif;font-weight:400}
    .wm div{line-height:27px;font-size:18.500px}.wm div+div{line-height:20px;font-size:14px}`; }
  view() { return `<div class="cols"><course-sidebar></course-sidebar><main><h1>${tx('Solution: Ingress Networking – 2',517)}</h1><video-player></video-player></main>
    <scroll-bar w="17" tw="13" pt="7" gap="42" len="522"></scroll-bar></div><div class="shade"></div>
    <div class="wm"><div>${tx('Activate Windows',157)}</div><div>${tx('Go to Settings to activate Windows.',236)}</div></div>`; }
}

class TaskBar extends View {
  css() { return `:host{display:flex;height:40px;background:linear-gradient(90deg,#344440 336px,#34423f 900px,#34433e 1030px,#394229 1230px,#43403a 1300px,#494548 1366px);color:#f5f5f5}
    .start{width:48px;background:#474544}
    .search{width:288px;background:#f1f1f1;border:1px solid #bdbdbd;border-width:1px 0 1px 1px;display:flex;align-items:center;color:#333;font-size:15px;padding-left:11px}
    .search ui-text{margin-left:11px}.search .br{margin-left:auto;align-self:flex-end}
    .apps{display:flex;margin-left:2px}.app{width:49.050px;position:relative;height:40px}
    .app.on:after{content:"";position:absolute;left:4px;right:5px;bottom:0;height:2px;background:#76b9ed}
    .app.ex:after{right:13px}.app.ex:before{content:"";position:absolute;right:5px;width:8px;bottom:0;height:2px;background:#52809f}
    .app.act{background:#5e6b68}.app.act:after{left:0;right:0}.ph{position:absolute;left:22px;top:18px}
    .tray{display:flex;margin-left:auto;align-items:center;height:40px}.we{margin-top:-4px}.deg{font-size:14px;margin:0 20px 0 8px}
    .clock{width:62px;text-align:center;line-height:18px;font-size:12px;padding:0 0 1px}
    .note{position:relative;margin-left:12px;width:36px;height:40px;padding:11px 0 0}.note b{position:absolute;left:13px;top:18px;font:600 12px/17px "Open Sans";width:10px;text-align:center}
    .edge{height:40px;width:5px;border-left:1px solid #8a8888;margin-left:1px}`; }
  view() {
    const A=['edge','firefox','store','ball','mail','snail','folder','clip','chrome','camera','chrome','photos'];
    return `<icon-cell class="start" name="win" w="48"></icon-cell><div class="search">${ic('search')}${tx('Type here to search',128)}${ic('bridge','class="br"')}</div>
    <icon-cell name="task" w="48"></icon-cell><div class="apps">${A.map((n,i)=>`<div class="app ${i===6?'on ex':i===10?'on act':i===11?'on':''}"><icon-cell name="${n}" w="49"></icon-cell>${i===10?`<div class="ph">${ic('avatar','scale=".72"')}</div>`:''}</div>`).join('')}</div>
    <div class="tray">${ic('weather','class="we"')}<div class="deg">${tx('24°C',29)}</div>${['chev','batt','net','meet','sync','sound','wifi'].map(n=>`<icon-cell name="${n}" w="24.200"></icon-cell>`).join('')}
    <div class="clock">${tx('8:29 PM',43)}<br>${tx('5/1/2023',46)}</div><div class="note">${ic('note')}<b>1</b></div><div class="edge"></div></div>`;
  }
}
class DesktopScreen extends View {
  css() { return ':host{display:grid;grid-template-rows:34px 36px 33px 625px 40px;width:1366px;height:768px;overflow:hidden}'; }
  view() { return '<tab-strip></tab-strip><tool-bar></tool-bar><bookmark-bar></bookmark-bar><course-page></course-page><task-bar></task-bar>'; }
}
Object.entries({'desktop-screen':DesktopScreen,'tab-strip':TabStrip,'browser-tab':BrowserTab,'tool-bar':ToolBar,'bookmark-bar':BookmarkBar,'course-page':CoursePage,'course-sidebar':CourseSidebar,'lesson-row':LessonRow,'section-row':SectionRow,'scroll-bar':ScrollBar,'video-player':VideoPlayer,'task-bar':TaskBar,'icon-cell':IconCell,'ui-icon':UiIcon,'ui-text':UiText}).forEach(([n,c])=>customElements.define(n,c));
</script>
</body>
</html>
